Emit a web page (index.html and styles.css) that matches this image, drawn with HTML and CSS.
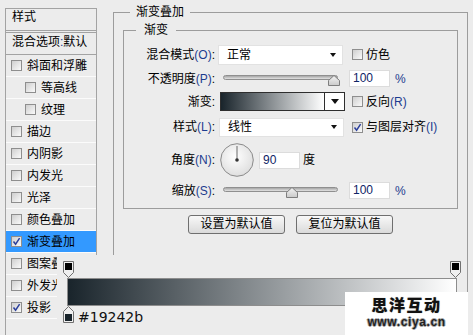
FILE: index.html
```html
<!DOCTYPE html>
<html lang="zh-CN">
<head>
    <meta charset="UTF-8">
    <meta name="viewport" content="width=device-width, initial-scale=1.0">
    <title>图层样式 - 渐变叠加</title>
    <link rel="stylesheet" href="styles.css">
</head>
<body>
    <div class="dialog">
        <!-- Style list on the left -->
        <div class="style-list">
            <div class="list-head">样式</div>
            <div class="list-blend">混合选项<span class="key">:</span>默认</div>
            <div class="list-item"><span class="cb"></span>斜面和浮雕</div>
            <div class="list-item sub"><span class="cb"></span>等高线</div>
            <div class="list-item sub"><span class="cb"></span>纹理</div>
            <div class="list-item"><span class="cb"></span>描边</div>
            <div class="list-item"><span class="cb"></span>内阴影</div>
            <div class="list-item"><span class="cb"></span>内发光</div>
            <div class="list-item"><span class="cb"></span>光泽</div>
            <div class="list-item"><span class="cb"></span>颜色叠加</div>
            <div class="list-item active"><span class="cb"><svg width="9" height="9" viewBox="0 0 9 9"><path d="M1.5 4.5 L3.6 7.2 L7.6 1.2" fill="none" stroke="#2b3f9c" stroke-width="1.5"/></svg></span>渐变叠加</div>
            <div class="list-item"><span class="cb"></span>图案叠加</div>
            <div class="list-item"><span class="cb"></span>外发光</div>
            <div class="list-item"><span class="cb"><svg width="9" height="9" viewBox="0 0 9 9"><path d="M1.5 4.5 L3.6 7.2 L7.6 1.2" fill="none" stroke="#2b3f9c" stroke-width="1.5"/></svg></span>投影</div>
            <div class="list-item"></div>
        </div>

        <!-- Gradient overlay settings -->
        <div class="panel">
            <div class="group group-outer">
                <div class="group-title">渐变叠加</div>
                <div class="group group-inner">
                    <div class="group-title">渐变</div>
                    <div class="form">
                        <label>混合模式<span class="key">(O)</span>:</label>
                        <div class="select">正常<span class="arrow"></span></div>
                        <div class="check"><span class="cb"></span><span>仿色</span></div>

                        <label>不透明度<span class="key">(P)</span>:</label>
                        <div class="slider">
                            <div class="slider-track"></div>
                            <svg class="knob" style="left: 105px;" width="12" height="11" viewBox="0 0 12 11"><defs><linearGradient id="kg1" x1="0" y1="0" x2="0" y2="1"><stop offset="0" stop-color="#f4f4f4"/><stop offset="1" stop-color="#c9c9c9"/></linearGradient></defs><path d="M0.5 10.5 V5.5 L6 0.5 L11.5 5.5 V10.5 Z" fill="url(#kg1)" stroke="#7d7d7d"/></svg>
                        </div>
                        <div class="num-row"><span class="num">100</span><span class="unit">%</span></div>

                        <label>渐变:</label>
                        <div class="swatch">
                            <div class="swatch-fill"></div>
                            <div class="swatch-btn"><span class="arrow big"></span></div>
                        </div>
                        <div class="check"><span class="cb"></span><span>反向<span class="key">(R)</span></span></div>

                        <label>样式<span class="key">(L)</span>:</label>
                        <div class="select small">线性<span class="arrow"></span></div>
                        <div class="check"><span class="cb"><svg width="9" height="9" viewBox="0 0 9 9"><path d="M1.5 4.5 L3.6 7.2 L7.6 1.2" fill="none" stroke="#2b3f9c" stroke-width="1.5"/></svg></span><span>与图层对齐<span class="key">(I)</span></span></div>

                        <label>角度<span class="key">(N)</span>:</label>
                        <div class="angle">
                            <svg width="34" height="34" viewBox="0 0 34 34"><defs><radialGradient id="dg" cx="0.45" cy="0.4" r="0.65"><stop offset="0" stop-color="#ffffff"/><stop offset="1" stop-color="#dcdcdc"/></radialGradient></defs><circle cx="17" cy="17" r="16.3" fill="url(#dg)" stroke="#8a8a8a"/><line x1="17" y1="17" x2="17" y2="3" stroke="#6a6a6a" stroke-width="1"/><circle cx="17" cy="17" r="1.8" fill="#333"/></svg>
                            <span class="num angle-num">90</span>
                            <span class="deg">度</span>
                        </div>
                        <div></div>

                        <label>缩放<span class="key">(S)</span>:</label>
                        <div class="slider">
                            <div class="slider-track"></div>
                            <svg class="knob" style="left: 63px;" width="12" height="11" viewBox="0 0 12 11"><defs><linearGradient id="kg2" x1="0" y1="0" x2="0" y2="1"><stop offset="0" stop-color="#f4f4f4"/><stop offset="1" stop-color="#c9c9c9"/></linearGradient></defs><path d="M0.5 10.5 V5.5 L6 0.5 L11.5 5.5 V10.5 Z" fill="url(#kg2)" stroke="#7d7d7d"/></svg>
                        </div>
                        <div class="num-row"><span class="num">100</span><span class="unit">%</span></div>
                    </div>
                </div>
                <div class="buttons">
                    <button class="btn">设置为默认值</button>
                    <button class="btn">复位为默认值</button>
                </div>
            </div>
        </div>
    </div>

    <!-- Gradient editor strip laid over the dialog -->
    <div class="grad-editor">
        <div class="stops-top">
            <svg width="11" height="17" viewBox="0 0 11 17"><path d="M0.5 0.5 H10.5 V11.5 L5.5 16.5 L0.5 11.5 Z" fill="#efefef" stroke="#707070"/><rect x="2" y="2" width="7" height="7" fill="#000"/></svg>
            <svg width="11" height="17" viewBox="0 0 11 17"><path d="M0.5 0.5 H10.5 V11.5 L5.5 16.5 L0.5 11.5 Z" fill="#efefef" stroke="#707070"/><rect x="2" y="2" width="7" height="7" fill="#000"/></svg>
        </div>
        <div class="grad-bar"></div>
        <div class="stops-bottom">
            <svg width="11" height="17" viewBox="0 0 11 17"><path d="M0.5 16.5 H10.5 V5.5 L5.5 0.5 L0.5 5.5 Z" fill="#efefef" stroke="#707070"/><rect x="2" y="8" width="7" height="7" fill="#19242b"/></svg>
            <span class="hex">#19242b</span>
        </div>
    </div>

    <div class="watermark">
        <div class="wm-title">思洋互动</div>
        <div class="wm-url">www.ciya.cn</div>
    </div>
</body>
</html>
```

FILE: styles.css
```css
/* Page base */
html, body {
    margin: 0;
    padding: 0;
    width: 473px;
    height: 335px;
    overflow: hidden;
    background-color: #ececec;
    font-family: "Liberation Sans", "Noto Sans CJK SC", sans-serif;
    font-size: 12px;
    line-height: 14px;
    color: #000;
}

body {
    position: relative;
}

.dialog {
    display: flex;
    align-items: flex-start;
    padding-left: 5px;
}

/* Left style list */
.style-list {
    width: 92px;
    height: 340px;
    margin-top: 8px;
    box-sizing: border-box;
    border: 1px solid #a3a3a3;
    border-bottom: none;
    flex-shrink: 0;
}

.list-head {
    height: 21px;
    line-height: 16px;
    padding-left: 6px;
    border-bottom: 3px double #a3a3a3;
}

.list-blend {
    height: 21px;
    line-height: 19px;
    padding-left: 6px;
    border-bottom: 1px solid #a3a3a3;
    white-space: nowrap;
}

.list-item {
    display: flex;
    align-items: center;
    gap: 5px;
    height: 21px;
    padding-left: 5px;
    border-bottom: 1px solid #fbfbfb;
    white-space: nowrap;
}

.list-item.sub {
    padding-left: 19px;
}

.list-item.active {
    background-color: #3399ff;
}

.key {
    color: #1d3c8f;
}

/* Checkbox */
.cb {
    display: inline-flex;
    align-items: center;
    justify-content: center;
    width: 11px;
    height: 11px;
    box-sizing: border-box;
    border: 1px solid #8e8e8e;
    background: linear-gradient(135deg, #cfcfcf, #fafafa);
    flex-shrink: 0;
}

.cb svg {
    display: block;
}

/* Right panel groups */
.panel {
    margin-left: 16px;
    margin-top: 12px;
}

.group {
    border: 1px solid #9c9c9c;
}

.group-outer {
    width: 355px;
    height: 330px;
    box-sizing: border-box;
}

.group-title {
    width: fit-content;
    margin-top: -8px;
    background-color: #ececec;
    line-height: 14px;
    white-space: nowrap;
}

.group-outer > .group-title {
    margin-left: 16px;
    padding: 0 6px;
}

.group-inner {
    margin: 11px 9px 0;
    padding-bottom: 4px;
}

.group-inner > .group-title {
    margin-left: 12px;
    padding: 0 8px;
}

.form {
    display: grid;
    grid-template-columns: 94px 131px 1fr;
    grid-template-rows: 21px 27px 19px 32px 34px 27px;
    align-items: center;
    margin-top: 7px;
}

.form label {
    text-align: right;
    padding-right: 3px;
    white-space: nowrap;
}

.select {
    display: flex;
    align-items: center;
    justify-content: space-between;
    width: 125px;
    height: 20px;
    box-sizing: border-box;
    padding: 0 6px 0 8px;
    background-color: #fff;
    border: 1px solid #e2e2e2;
}

.select.small {
    height: 19px;
    margin-left: 1px;
}

.arrow {
    width: 0;
    height: 0;
    border-left: 3.5px solid transparent;
    border-right: 3.5px solid transparent;
    border-top: 4px solid #111;
}

.arrow.big {
    border-left-width: 4.5px;
    border-right-width: 4.5px;
    border-top-width: 5px;
}

.check {
    display: flex;
    align-items: center;
    gap: 3px;
    margin-left: 3px;
    white-space: nowrap;
}

/* Sliders */
.slider {
    position: relative;
    width: 115px;
    height: 14px;
    margin-left: 5px;
}

.slider-track {
    height: 5px;
    margin-top: 3px;
    box-sizing: border-box;
    border: 1px solid #8f8f8f;
    border-radius: 3px;
    background: linear-gradient(#a6a6a6, #e2e2e2);
}

.knob {
    position: absolute;
    top: 3px;
}

.num-row {
    display: flex;
    align-items: center;
}

.num {
    display: block;
    width: 41px;
    height: 17px;
    box-sizing: border-box;
    padding-left: 3px;
    line-height: 15px;
    background-color: #fff;
    border: 1px solid #dcdcdc;
    color: #0f2466;
}

.unit {
    margin-left: 5px;
    color: #1d3c8f;
}

/* Gradient swatch */
.swatch {
    display: flex;
    width: 125px;
    height: 19px;
    box-sizing: border-box;
    margin-left: 2px;
    border: 1px solid #2e2e2e;
}

.swatch-fill {
    flex: 1;
    background: linear-gradient(to right, #19242b, #ffffff);
}

.swatch-btn {
    display: flex;
    align-items: center;
    justify-content: center;
    width: 19px;
    border-left: 1px solid #2e2e2e;
    background-color: #fff;
}

/* Angle */
.angle {
    display: flex;
    align-items: center;
    margin-left: 2px;
}

.angle svg {
    display: block;
}

.angle-num {
    margin-left: 5px;
}

.deg {
    margin-left: 3px;
}

/* Buttons */
.buttons {
    display: flex;
    justify-content: center;
    gap: 11px;
    margin-top: 6px;
}

.btn {
    width: 97px;
    height: 19px;
    padding: 0;
    box-sizing: border-box;
    border: 1px solid #6f6f6f;
    border-radius: 3px;
    background: linear-gradient(#f8f8f8, #dadada);
    font-family: inherit;
    font-size: 12px;
    line-height: 17px;
    color: #000;
}

/* Gradient editor overlay */
.grad-editor {
    position: absolute;
    left: 57px;
    top: 255px;
    width: 409px;
    height: 80px;
    background-color: #ececec;
}

.stops-top {
    display: flex;
    justify-content: space-between;
    height: 17px;
    padding: 6px 5px 0 6px;
}

.stops-top svg,
.stops-bottom svg {
    display: block;
}

.grad-bar {
    width: 390px;
    height: 28px;
    box-sizing: border-box;
    margin-left: 10px;
    border: 1px solid #8d8d8d;
    background: linear-gradient(to right, #19242b, #ffffff);
}

.stops-bottom {
    display: flex;
    align-items: flex-start;
    gap: 4px;
    padding-left: 6px;
}

.hex {
    margin-top: 3px;
    font-family: "DejaVu Sans", sans-serif;
    font-size: 14px;
    line-height: 17px;
    color: #111;
}

/* Watermark */
.watermark {
    position: absolute;
    right: 5px;
    top: 292px;
    width: 123px;
    height: 43px;
    background-color: #fff;
    text-align: center;
}

.wm-title {
    margin-top: 4px;
    font-family: "Noto Sans CJK SC", sans-serif;
    font-weight: 900;
    font-size: 16px;
    line-height: 16px;
    letter-spacing: 1.5px;
    color: #111;
    text-shadow: 0 0 1px #999;
}

.wm-url {
    margin-top: 4px;
    font-family: "Liberation Sans", sans-serif;
    font-weight: bold;
    font-size: 12px;
    line-height: 12px;
    letter-spacing: 0.6px;
    color: #222;
    text-shadow: 1px 0 #aaa, -1px 0 #aaa, 0 1px #aaa, 0 -1px #aaa;
}
```
